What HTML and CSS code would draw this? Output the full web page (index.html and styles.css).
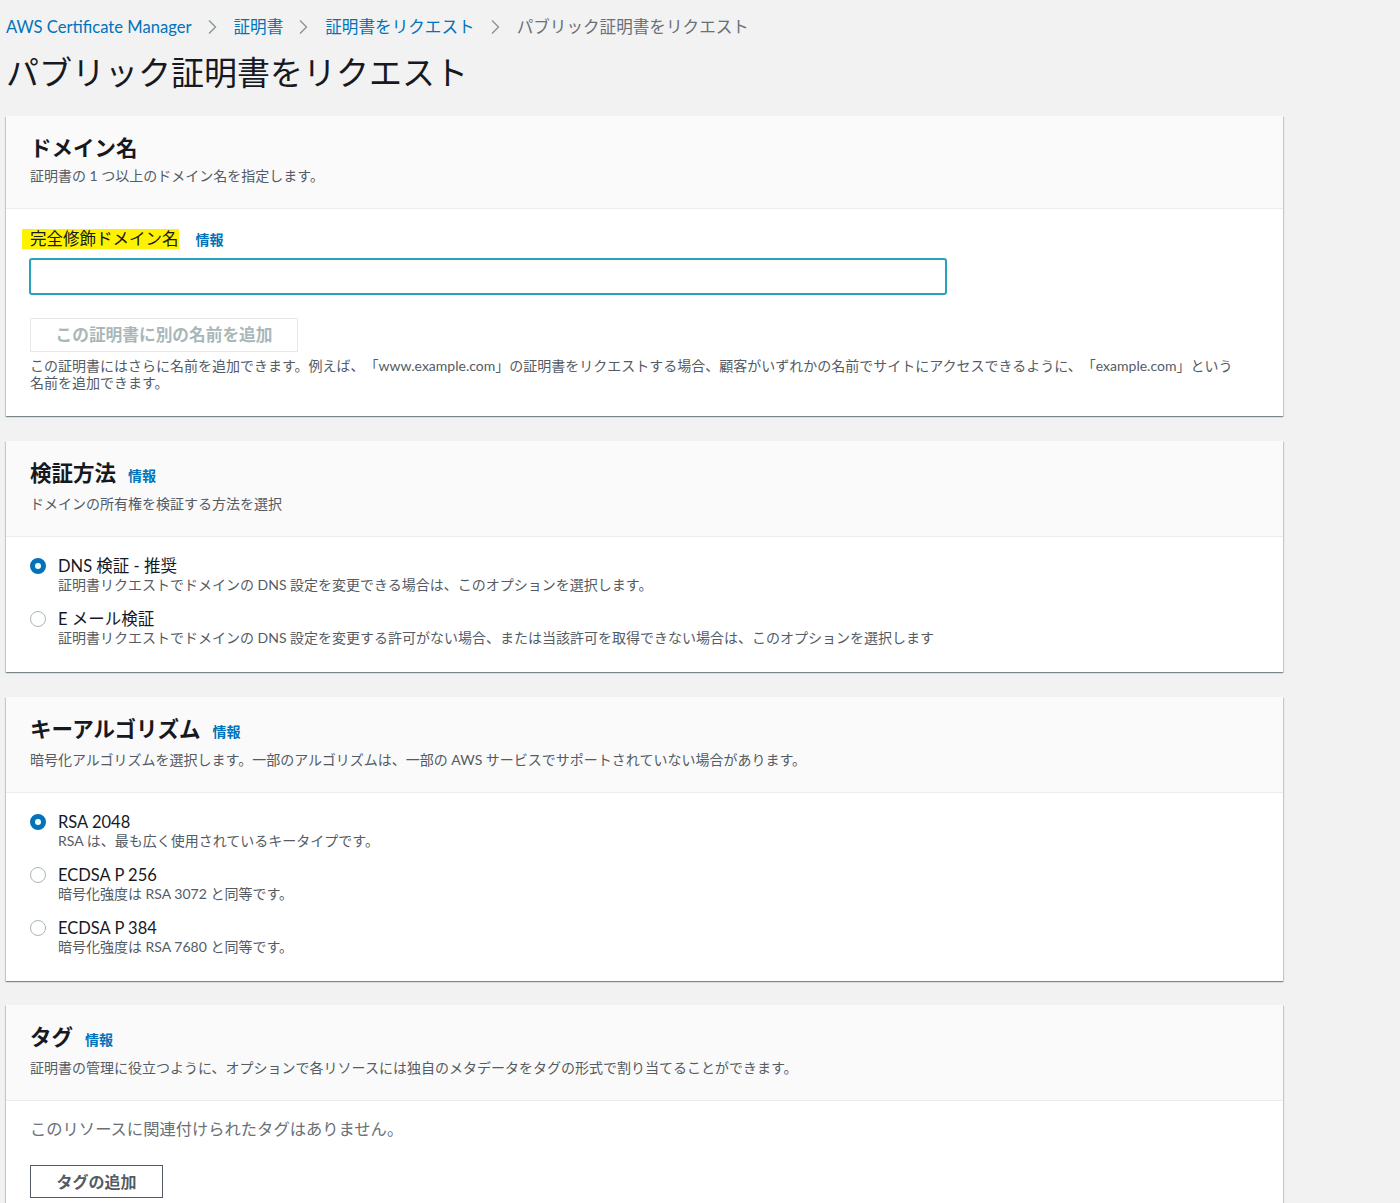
FILE: index.html
```html
<!DOCTYPE html>
<html lang="ja">
<head>
<meta charset="utf-8">
<title>パブリック証明書をリクエスト</title>
<link rel="stylesheet" href="styles.css">
</head>
<body>
<div class="page">
  <nav class="crumbs">
    <a class="crumb link" href="#">AWS Certificate Manager</a>
    <span class="sep"><svg width="10" height="16" viewBox="0 0 10 16"><path d="M2 1.5 L8.5 8 L2 14.5" fill="none" stroke="#879596" stroke-width="1.4"/></svg></span>
    <a class="crumb link" href="#">証明書</a>
    <span class="sep"><svg width="10" height="16" viewBox="0 0 10 16"><path d="M2 1.5 L8.5 8 L2 14.5" fill="none" stroke="#879596" stroke-width="1.4"/></svg></span>
    <a class="crumb link" href="#">証明書をリクエスト</a>
    <span class="sep"><svg width="10" height="16" viewBox="0 0 10 16"><path d="M2 1.5 L8.5 8 L2 14.5" fill="none" stroke="#879596" stroke-width="1.4"/></svg></span>
    <span class="crumb current">パブリック証明書をリクエスト</span>
  </nav>
  <h1 class="page-title">パブリック証明書をリクエスト</h1>

  <section class="card">
    <header class="card-head">
      <h2 class="card-title">ドメイン名</h2>
      <p class="card-sub">証明書の 1 つ以上のドメイン名を指定します。</p>
    </header>
    <div class="card-body body-domain">
      <div class="field-label"><span class="mark">完全修飾ドメイン名</span><a class="info" href="#">情報</a></div>
      <div class="input"></div>
      <button class="btn btn-disabled">この証明書に別の名前を追加</button>
      <p class="hint">この証明書にはさらに名前を追加できます。例えば、「www.example.com」の証明書をリクエストする場合、顧客がいずれかの名前でサイトにアクセスできるように、「example.com」という<br>名前を追加できます。</p>
    </div>
  </section>

  <section class="card">
    <header class="card-head">
      <h2 class="card-title">検証方法<a class="info" href="#">情報</a></h2>
      <p class="card-sub">ドメインの所有権を検証する方法を選択</p>
    </header>
    <div class="card-body radios">
      <div class="radio-row">
        <span class="radio checked"></span>
        <div class="radio-text">
          <div class="radio-label">DNS 検証 - 推奨</div>
          <div class="radio-desc">証明書リクエストでドメインの DNS 設定を変更できる場合は、このオプションを選択します。</div>
        </div>
      </div>
      <div class="radio-row">
        <span class="radio"></span>
        <div class="radio-text">
          <div class="radio-label">E メール検証</div>
          <div class="radio-desc">証明書リクエストでドメインの DNS 設定を変更する許可がない場合、または当該許可を取得できない場合は、このオプションを選択します</div>
        </div>
      </div>
    </div>
  </section>

  <section class="card">
    <header class="card-head">
      <h2 class="card-title">キーアルゴリズム<a class="info" href="#">情報</a></h2>
      <p class="card-sub">暗号化アルゴリズムを選択します。一部のアルゴリズムは、一部の AWS サービスでサポートされていない場合があります。</p>
    </header>
    <div class="card-body radios">
      <div class="radio-row">
        <span class="radio checked"></span>
        <div class="radio-text">
          <div class="radio-label">RSA 2048</div>
          <div class="radio-desc">RSA は、最も広く使用されているキータイプです。</div>
        </div>
      </div>
      <div class="radio-row">
        <span class="radio"></span>
        <div class="radio-text">
          <div class="radio-label">ECDSA P 256</div>
          <div class="radio-desc">暗号化強度は RSA 3072 と同等です。</div>
        </div>
      </div>
      <div class="radio-row">
        <span class="radio"></span>
        <div class="radio-text">
          <div class="radio-label">ECDSA P 384</div>
          <div class="radio-desc">暗号化強度は RSA 7680 と同等です。</div>
        </div>
      </div>
    </div>
  </section>

  <section class="card card-last">
    <header class="card-head">
      <h2 class="card-title">タグ<a class="info" href="#">情報</a></h2>
      <p class="card-sub">証明書の管理に役立つように、オプションで各リソースには独自のメタデータをタグの形式で割り当てることができます。</p>
    </header>
    <div class="card-body body-tags">
      <p class="empty">このリソースに関連付けられたタグはありません。</p>
      <button class="btn btn-normal">タグの追加</button>
    </div>
  </section>
</div>
</body>
</html>
```

FILE: styles.css
```css
* { box-sizing: border-box; }
html, body { margin: 0; padding: 0; }
body {
  background: #f2f2f2;
  font-family: Lato, "Noto Sans CJK JP", sans-serif;
  color: #16191f;
  text-spacing-trim: space-all;
}
.page {
  width: 1283px;
  padding: 0 0 40px 6px;
}
.crumbs {
  display: flex;
  align-items: center;
  height: 52px;
  padding-top: 1px;
  font-size: 16.6px;
  line-height: 20px;
}
.crumb { text-decoration: none; white-space: nowrap; }
.link { color: #0073bb; }
.current { color: #687078; }
.sep {
  display: flex;
  align-items: center;
  margin: 0 17px 0 15px;
}
.page-title {
  margin: 0;
  font-size: 33px;
  font-weight: 400;
  line-height: 40px;
  color: #16191f;
  height: 64px;
}
.card {
  background: #fff;
  margin-bottom: 25px;
  box-shadow: 0 1px 1px 0 rgba(0,28,36,.3), 1px 1px 1px 0 rgba(0,28,36,.15), -1px 1px 1px 0 rgba(0,28,36,.15);
}
.card-last { margin-top: -1px; }
.card-head {
  background: #fafafa;
  border-bottom: 1px solid #eaeded;
  padding: 18px 24px 23px 24px;
}
.card-title {
  margin: 0;
  font-size: 21.5px;
  font-weight: 700;
  line-height: 28px;
  display: flex;
  align-items: baseline;
}
.card-sub {
  margin: 5px 0 0 0;
  font-size: 14px;
  line-height: 18px;
  color: #545b64;
}
.info {
  color: #0073bb;
  font-size: 14px;
  font-weight: 700;
  text-decoration: none;
  margin-left: 12px;
}
.card-body { padding: 0 24px; }
.body-domain { padding-top: 20px; padding-bottom: 25px; }
.field-label {
  font-size: 16.5px;
  line-height: 20px;
  display: flex;
  align-items: baseline;
  color: #16191f;
}
.mark {
  background: #fff200;
  padding-left: 8px;
  margin-left: -8px;
}
.field-label .info { margin-left: 17px; }
.input {
  margin-top: 8px;
  width: 918px;
  height: 37px;
  margin-left: -1px;
  border: 2px solid #27a2bd;
  border-radius: 3px;
  background: #fff;
}
.btn {
  font-family: inherit;
  font-weight: 700;
  line-height: 20px;
  background: #fff;
  cursor: pointer;
  display: block;
}
.btn-disabled {
  margin-top: 23px;
  width: 268px;
  height: 34px;
  font-size: 16.7px;
  color: #aab7b8;
  border: 1px solid #e6e9ea;
  padding: 0 0 1px 0;
}
.hint {
  margin: 5px -24px 0 0;
  font-size: 14px;
  line-height: 17px;
  color: #545b64;
}
.radios { padding-top: 19px; padding-bottom: 25px; display: flex; flex-direction: column; gap: 15px; }
.radio-row { display: flex; align-items: flex-start; }
.radio {
  width: 16px;
  height: 16px;
  border-radius: 50%;
  border: 1.5px solid #aab7b8;
  margin: 2px 12px 0 0;
  flex: none;
  background: #fff;
}
.radio.checked { border: 5px solid #0073bb; }
.radio-label { font-size: 16.5px; line-height: 20px; color: #16191f; }
.radio-desc { font-size: 14px; line-height: 18px; color: #545b64; }
.body-tags { padding-top: 18px; padding-bottom: 20px; }
.empty {
  margin: 0;
  font-size: 16.3px;
  line-height: 20px;
  color: #687078;
}
.btn-normal {
  margin-top: 26px;
  width: 133px;
  height: 33px;
  font-size: 16px;
  color: #545b64;
  border: 1px solid #545b64;
  padding: 0;
}
```
